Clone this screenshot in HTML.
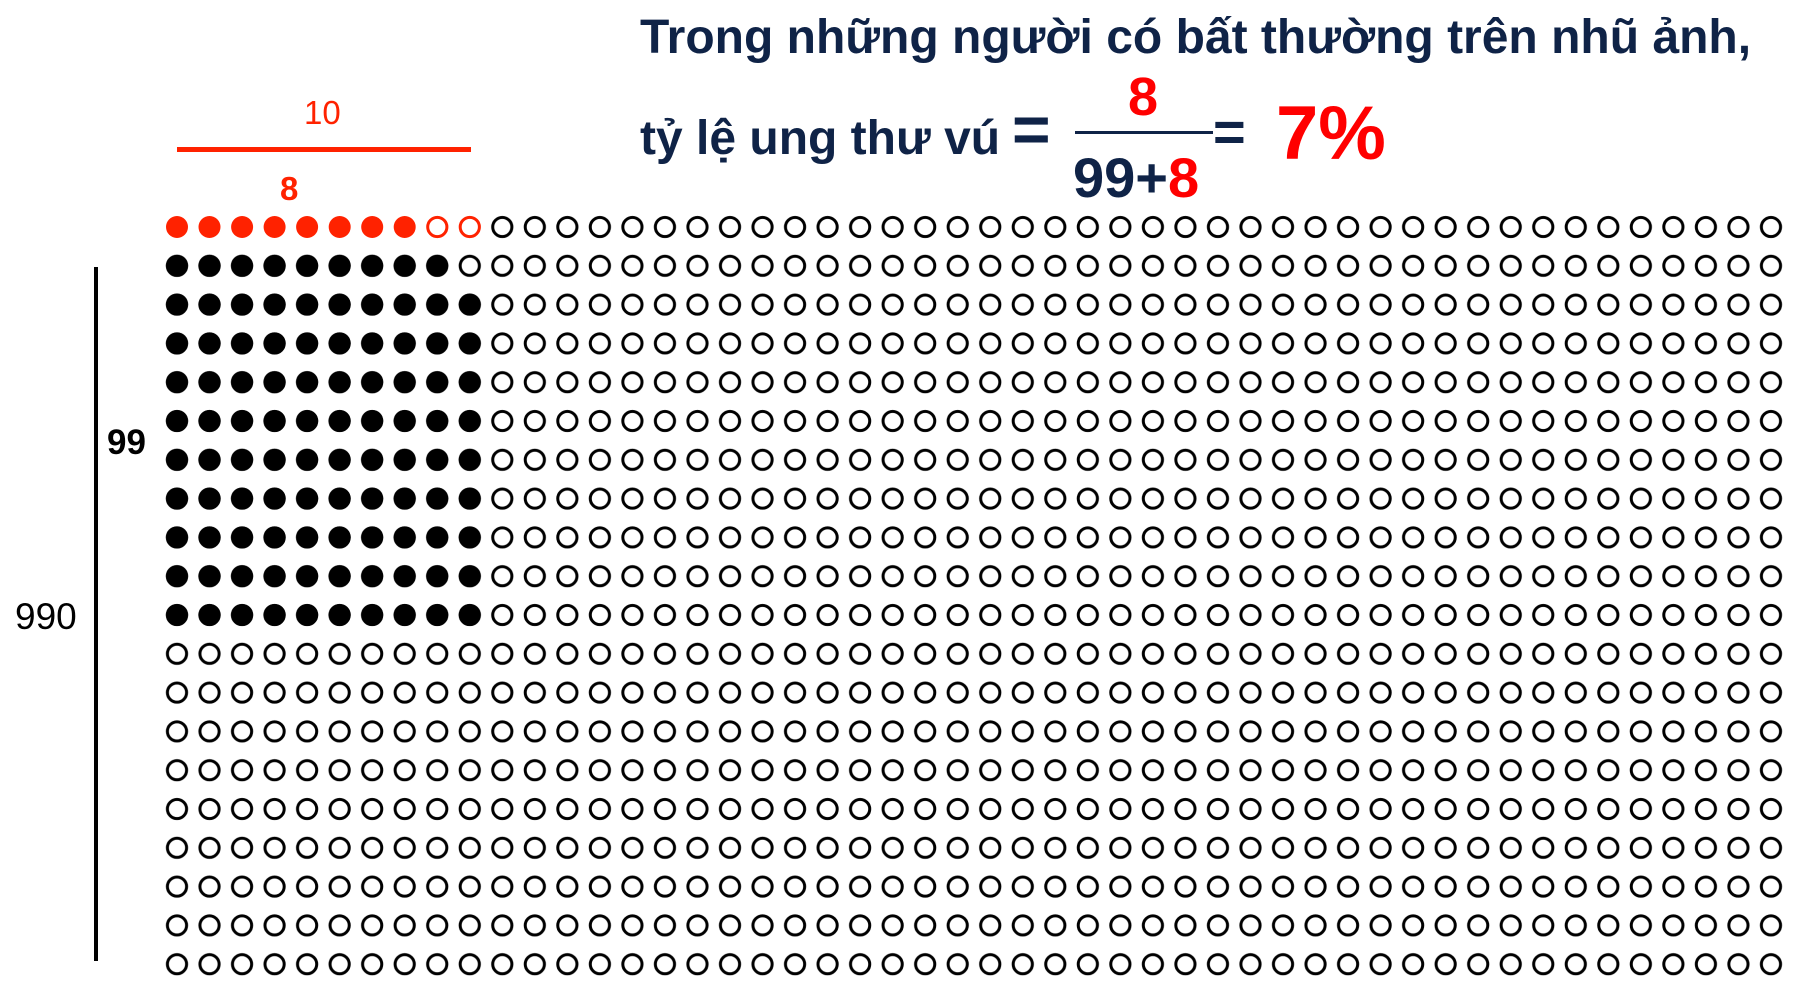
<!DOCTYPE html>
<html><head><meta charset="utf-8"><style>
html,body{margin:0;padding:0;background:#fff;width:1808px;height:999px;overflow:hidden;position:relative;font-family:"Liberation Sans",Arial,sans-serif}
.t{position:absolute;white-space:nowrap;line-height:1}
.navy{color:#0f2347;font-weight:bold}
.red{color:#ff0000}
</style></head><body>
<svg width="1808" height="999" style="position:absolute;left:0;top:0">
<defs>
<pattern id="h" patternUnits="userSpaceOnUse" x="160.735" y="207.6" width="32.53" height="38.8">
<circle cx="16.265" cy="19.4" r="9.6" fill="none" stroke="#000" stroke-width="3"/>
</pattern>
<pattern id="f" patternUnits="userSpaceOnUse" x="160.735" y="207.6" width="32.53" height="38.8">
<circle cx="16.265" cy="19.4" r="11" fill="#000"/>
</pattern>
</defs>
<rect x="160.735" y="246.4" width="1626.5" height="737.2" fill="url(#h)"/>
<rect x="486" y="207.6" width="1301.2" height="38.8" fill="url(#h)"/>
<rect x="160.735" y="246.4" width="292.77" height="388" fill="url(#f)"/>
<rect x="453.5" y="285.2" width="32.53" height="349.2" fill="url(#f)"/>
<g fill="#ff2200">
<circle cx="177" cy="227" r="11"/><circle cx="209.5" cy="227" r="11"/><circle cx="242.1" cy="227" r="11"/><circle cx="274.6" cy="227" r="11"/><circle cx="307.1" cy="227" r="11"/><circle cx="339.7" cy="227" r="11"/><circle cx="372.2" cy="227" r="11"/><circle cx="404.7" cy="227" r="11"/>
</g>
<circle cx="437.3" cy="227" r="9.6" fill="none" stroke="#ff2200" stroke-width="3"/>
<circle cx="469.8" cy="227" r="9.6" fill="none" stroke="#ff2200" stroke-width="3"/>
<rect x="177" y="147" width="294" height="5" fill="#ff2200"/>
<rect x="94" y="267" width="4" height="694" fill="#000"/>
<rect x="1075" y="131" width="138" height="3" fill="#0f2347"/>
</svg>
<div class="t red" style="left:304px;top:96px;font-size:33px;color:#ff2200">10</div>
<div class="t red" style="left:280px;top:172px;font-size:33px;font-weight:bold;color:#ff2200">8</div>
<div class="t" style="left:107px;top:425px;font-size:35px;font-weight:bold">99</div>
<div class="t" style="left:15px;top:598px;font-size:37px">990</div>
<div class="t navy" style="left:640px;top:14px;font-size:48px">Trong những người có bất thường trên nhũ ảnh,</div>
<div class="t navy" style="left:640px;top:115px;font-size:48px">tỷ lệ ung thư vú</div>
<div class="t navy" style="left:1012px;top:96px;font-size:66px">=</div>
<div class="t navy red" style="left:1128px;top:70px;font-size:54px;color:#ff0000">8</div>
<div class="t navy" style="left:1073px;top:150px;font-size:56px">99+<span style="color:#ff0000">8</span></div>
<div class="t navy" style="left:1213px;top:104px;font-size:56px">=</div>
<div class="t red" style="left:1276px;top:96px;font-size:76px;font-weight:bold">7%</div>
</body></html>
